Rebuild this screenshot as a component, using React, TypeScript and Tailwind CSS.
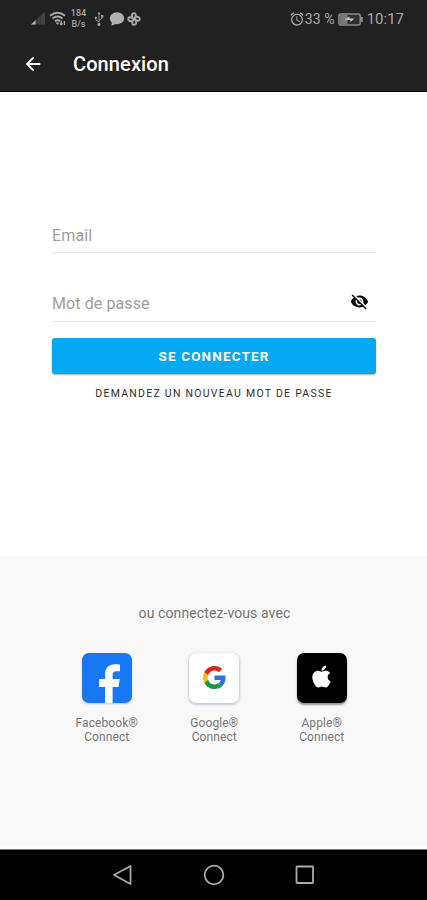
import type { ReactNode } from 'react'
import { FaApple, FaUsb } from 'react-icons/fa'
import { MdAlarm, MdArrowBack, MdVisibilityOff } from 'react-icons/md'

function SignalIcon() {
  return (
    <svg className="w-4 h-4 shrink-0" viewBox="0 0 16 16">
      <path d="M1 13.5 15 .5v13z" fill="#424242" />
      <path d="M1 13.5 5.500 9.300v4.200z" fill="#b4b4b4" />
      <path d="M7 7.900v5.600M10.500 4.700v8.800" stroke="#303030" strokeWidth=".6" />
    </svg>
  )
}

function WifiIcon() {
  return (
    <svg className="w-[18px] h-4 shrink-0" viewBox="0 0 18 16" fill="none" stroke="#a8a8a8" strokeWidth="1.900">
      <path d="M1 4.800Q8.500-1.200 16 4.800M3.500 7.600q5-4 10 0M5.900 10.200q2.600-2 5.200 0" />
      <path d="m6.500 11.500 2 2.500 2-2.500z" fill="#a8a8a8" stroke="none" />
      <path d="M12.200 9.800v4m-1.500-1.400 1.500 1.500 1.500-1.500M15.400 14v-4" strokeWidth="1.200" />
    </svg>
  )
}

function BubbleIcon() {
  return (
    <svg className="w-4 h-[14px] shrink-0" viewBox="0 0 16 14" fill="#b0b0b0">
      <ellipse cx="8" cy="6.300" rx="7.200" ry="6" />
      <path d="m3 9-.6 4.800L8 11.500z" />
    </svg>
  )
}

function FanIcon() {
  return (
    <svg className="w-[14px] h-[14px] shrink-0" viewBox="0 0 14 14" fill="none" stroke="#a8a8a8" strokeWidth="1.800">
      <path d="M7 7C3.500 5 4.500 1 7.500 1.300 9.500 1.600 9 4.500 7 7z" />
      <path d="M7 7c2-3.500 6-2.500 5.800.4C12.500 9.500 9.500 9 7 7z" />
      <path d="M7 7c3.500 2 2.500 6-.4 5.800C4.500 12.500 5 9.500 7 7z" />
      <path d="M7 7c-2 3.500-6 2.500-5.800-.4C1.500 4.500 4.500 5 7 7z" />
    </svg>
  )
}

function BatteryIcon() {
  return (
    <svg className="w-[25px] h-[13px] shrink-0" viewBox="0 0 25 13">
      <rect x=".8" y="1" width="21.400" height="11" rx="2" fill="#303030" stroke="#8c8c8c" strokeWidth="1.400" />
      <rect x="1.500" y="1.700" width="8" height="9.600" rx="1" fill="#777" />
      <path d="M6.500 6.300 11.500 3.500v2h5L12.500 9V7.300z" fill="#c4c4c4" />
      <path d="M23.900 4v5" stroke="#999" strokeWidth="1.600" />
    </svg>
  )
}

function FacebookIcon() {
  return (
    <svg className="w-full h-full" viewBox="0 0 50 50" fill="#fff">
      <path d="M23 50V34h-6v-8h6v-4.500c0-7 4-10.300 9.800-10.300 2.200 0 4 .2 5.200.4v6.600h-3.500c-3 0-3.900 1.500-3.900 3.800v4h7.200l-1.300 8h-5.900v16z" />
    </svg>
  )
}

function GoogleIcon() {
  return (
    <svg className="w-[23px] h-[23px] mb-0.5" viewBox="0 0 48 48">
      <path fill="#e2231a" d="M24 9.500c3.540 0 6.710 1.220 9.210 3.600l6.850-6.850C35.900 2.380 30.470 0 24 0 14.620 0 6.510 5.380 2.560 13.220l7.980 6.190C12.430 13.720 17.740 9.500 24 9.500z" />
      <path fill="#2b74e8" d="M46.980 24.550c0-1.570-.15-3.090-.38-4.550H24v9.020h12.940c-.58 2.960-2.260 5.480-4.780 7.180l7.730 6c4.510-4.180 7.090-10.360 7.090-17.650z" />
      <path fill="#fbbc05" d="M10.530 28.590c-.48-1.450-.76-2.990-.76-4.590s.27-3.140.76-4.590l-7.980-6.190C.92 16.460 0 20.120 0 24c0 3.880.92 7.540 2.560 10.780l7.970-6.190z" />
      <path fill="#159a3e" d="M24 48c6.480 0 11.930-2.130 15.890-5.810l-7.730-6c-2.150 1.450-4.920 2.300-8.160 2.300-6.260 0-11.570-4.220-13.470-9.910l-7.980 6.190C6.510 42.620 14.620 48 24 48z" />
    </svg>
  )
}

interface SocialButtonProps {
  name: string
  tile: string
  children: ReactNode
}

function SocialButton({ name, tile, children }: SocialButtonProps) {
  return (
    <button type="button" className="w-[107.5px] flex flex-col items-center">
      <span className={`w-[50px] h-[50px] rounded-[7px] overflow-hidden flex items-center justify-center ${tile}`}>
        {children}
      </span>
      <span className="mt-[13px] text-[12px] leading-[14px] tracking-[0.1px] text-[#777]">
        {name}®<br />Connect
      </span>
    </button>
  )
}

function StatusBar() {
  return (
    <div className="h-[38px] pl-[30px] pr-[23px] flex items-center justify-between text-[#a8a8a8]">
      <div className="flex items-center">
        <SignalIcon />
        <span className="ml-[3px] flex"><WifiIcon /></span>
        <span className="ml-[3px] w-[17px] text-center text-[9px] leading-[11px] font-medium">184<br />B/s</span>
        <FaUsb className="ml-[5px] w-[14px] h-[14px] -rotate-90" />
        <span className="ml-[3px] flex"><BubbleIcon /></span>
        <span className="ml-[2px] mb-px flex"><FanIcon /></span>
      </div>
      <div className="flex items-center text-[14px]">
        <MdAlarm className="w-4 h-4" />
        <span className="tracking-[0.1px]">33 %</span>
        <span className="ml-[3px] flex"><BatteryIcon /></span>
        <span className="ml-[4px] text-[15px] leading-5">10:17</span>
      </div>
    </div>
  )
}

export default function App() {
  return (
    <div className="w-full h-[900px] flex flex-col bg-white font-['Roboto',sans-serif]">
      <header className="h-[92px] shrink-0 bg-[#212121] border-b border-black">
        <StatusBar />
        <div className="h-[52px] flex items-center">
          <MdArrowBack className="ml-[22px] w-[22px] h-[22px] text-white" />
          <h1 className="ml-[29px] text-[20px] font-medium tracking-[0.1px] text-white">Connexion</h1>
        </div>
      </header>

      <form className="h-[464px] shrink-0 pl-[52px] pr-[51px] pt-[125px] flex flex-col" onSubmit={e => e.preventDefault()}>
        <input
          type="email"
          placeholder="Email"
          className="h-[36px] w-full pt-0.5 border-b border-[#e6e6e6] text-[16px] tracking-[0.15px] outline-none placeholder:text-[#a0a0a0]"
        />
        <div className="mt-8 h-[37px] flex items-center border-b border-[#e6e6e6]">
          <input
            type="password"
            placeholder="Mot de passe"
            className="flex-1 min-w-0 pt-0.5 text-[16px] tracking-[0.1px] outline-none placeholder:text-[#a0a0a0]"
          />
          <MdVisibilityOff className="mr-[7px] mb-[3px] w-[19px] h-[19px] text-black" />
        </div>
        <button
          type="submit"
          className="mt-4 h-9 shrink-0 rounded-[3px] bg-[#03a9f4] shadow-[0_1px_2px_rgba(0,0,0,0.35)] text-[13.5px] leading-[18px] font-bold tracking-[1.15px] text-white"
        >
          SE CONNECTER
        </button>
        <button type="button" className="mt-[12px] text-[10.5px] leading-4 tracking-[1.26px] text-[#303030]">
          DEMANDEZ UN NOUVEAU MOT DE PASSE
        </button>
      </form>

      <section className="flex-1 bg-[#f8f8f8] border-b-[3px] border-white pt-[48px] flex flex-col items-center">
        <p className="pl-[2px] text-[14px] leading-[18px] tracking-[0.1px] text-[#757575]">ou connectez-vous avec</p>
        <div className="mt-[31px] pl-[1.5px] flex">
          <SocialButton name="Facebook" tile="bg-[#1877f2] shadow-[0_1px_2px_rgba(0,0,0,0.2)]">
            <FacebookIcon />
          </SocialButton>
          <SocialButton name="Google" tile="bg-white shadow-[0_1px_2px_1px_rgba(70,70,160,0.25)]">
            <GoogleIcon />
          </SocialButton>
          <SocialButton name="Apple" tile="bg-black shadow-[0_2px_2px_rgba(0,0,0,0.4)]">
            <FaApple className="mb-[3px] w-[25px] h-[25px] text-white" />
          </SocialButton>
        </div>
      </section>

      <nav className="h-[51px] shrink-0 bg-black border-t border-[#777] px-[112px] flex items-center justify-between">
        <svg className="w-5 h-[22px]" viewBox="0 0 20 22" fill="none" stroke="#aaa" strokeWidth="1.800">
          <path d="M2 11 18.500 2v18z" strokeLinejoin="round" />
        </svg>
        <svg className="w-[22px] h-[22px]" viewBox="0 0 22 22" fill="none" stroke="#aaa" strokeWidth="1.800">
          <circle cx="11" cy="11" r="9.300" />
        </svg>
        <svg className="w-5 h-5" viewBox="0 0 20 20" fill="none" stroke="#aaa" strokeWidth="1.800">
          <rect x="1.500" y="1.500" width="16.500" height="16.500" rx=".5" />
        </svg>
      </nav>
    </div>
  )
}
